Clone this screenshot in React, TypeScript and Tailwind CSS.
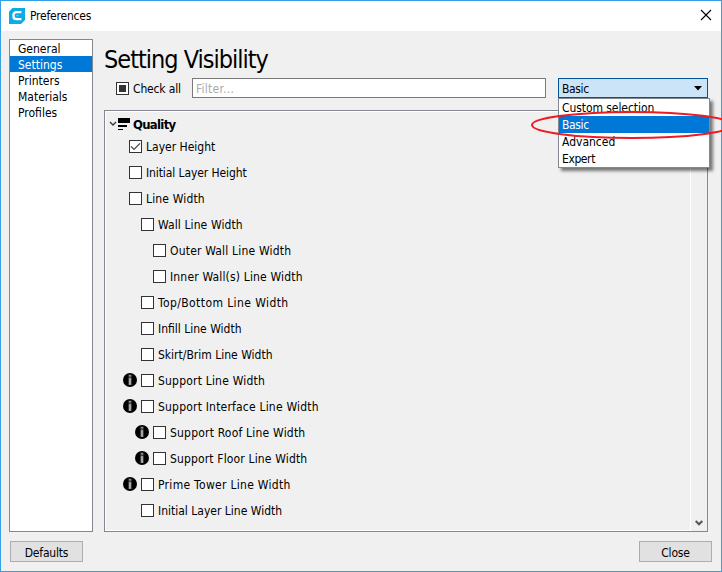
import React from "react";

type Row = { label: string; pad: string; track: string; info?: boolean; checked?: boolean };

const rows: Row[] = [
  { label: "Layer Height", pad: "pl-[6px]", track: "tracking-normal", checked: true },
  { label: "Initial Layer Height", pad: "pl-[6px]", track: "tracking-[-0.1px]" },
  { label: "Line Width", pad: "pl-[6px]", track: "tracking-[0.15px]" },
  { label: "Wall Line Width", pad: "pl-[18px]", track: "tracking-[0.1px]" },
  { label: "Outer Wall Line Width", pad: "pl-[30px]", track: "tracking-[0.19px]" },
  { label: "Inner Wall(s) Line Width", pad: "pl-[30px]", track: "tracking-[0.17px]" },
  { label: "Top/Bottom Line Width", pad: "pl-[18px]", track: "tracking-[0.41px]" },
  { label: "Infill Line Width", pad: "pl-[18px]", track: "tracking-normal" },
  { label: "Skirt/Brim Line Width", pad: "pl-[18px]", track: "tracking-normal" },
  { label: "Support Line Width", pad: "pl-[18px]", track: "tracking-[0.2px]", info: true },
  { label: "Support Interface Line Width", pad: "pl-[18px]", track: "tracking-[0.2px]", info: true },
  { label: "Support Roof Line Width", pad: "pl-[30px]", track: "tracking-[0.2px]", info: true },
  { label: "Support Floor Line Width", pad: "pl-[30px]", track: "tracking-[0.15px]", info: true },
  { label: "Prime Tower Line Width", pad: "pl-[18px]", track: "tracking-[0.3px]", info: true },
  { label: "Initial Layer Line Width", pad: "pl-[18px]", track: "tracking-normal" },
];

const pages = ["General", "Settings", "Printers", "Materials", "Profiles"];
const presets = [
  { name: "Custom selection", track: "tracking-[-0.07px]" },
  { name: "Basic", track: "tracking-[-0.35px]" },
  { name: "Advanced", track: "tracking-normal" },
  { name: "Expert", track: "tracking-[-0.4px]" },
];

function CheckBox({ state }: { state?: "checked" | "partial" }) {
  return (
    <span className="flex size-[13px] shrink-0 items-center justify-center border border-[#333] bg-white">
      {state === "partial" && <span className="size-[7px] bg-[#333]" />}
      {state === "checked" && (
        <svg width="11" height="11" viewBox="0 0 11 11" fill="none" stroke="#444" strokeWidth="1.3">
          <path d="M1 5.4 4 8.4 10 2.4" />
        </svg>
      )}
    </span>
  );
}

function InfoIcon() {
  return (
    <svg className="-ml-px" width="14" height="14" viewBox="0 0 14 14">
      <circle cx="7" cy="7" r="7" fill="#000" />
      <path d="M5.6 1.8h2.8v2H5.6zM5.6 4.6h2.8v7.4H5.6z" fill="#8c8c8c" />
      <path d="M6.5 5.4h1v6h-1z" fill="#c4c4c4" />
    </svg>
  );
}

function PushButton({ children }: { children: React.ReactNode }) {
  return (
    <button className="flex h-[21px] w-[73px] items-center justify-center border border-[#adadad] bg-[#e1e1e1] pt-[2px] tracking-[-0.2px]">
      {children}
    </button>
  );
}

export default function App() {
  return (
    <div className="relative h-[572px] w-[722px] overflow-hidden font-['DejaVu_Sans_Condensed','DejaVu_Sans',sans-serif] text-[12px] leading-[16px] text-black [font-stretch:condensed]">
      <div className="flex h-full flex-col border border-[#35a0e4] bg-[#f0f0f0]">
        <header className="flex h-[30px] shrink-0 items-center bg-white pl-2">
          <svg className="mb-px" width="16" height="16" viewBox="0 0 16 16">
            <path d="M3.5 0H16v12l-4 4H0V3.5z" fill="#0eaae6" />
            <path d="M12.4 4.2H7.6Q4.4 4.2 4.4 7.7T7.6 11.2H12.4" fill="none" stroke="#fff" strokeWidth="2.3" />
            <path d="M7.4 7.7H9.4" stroke="#7fd3f3" strokeWidth="1" />
          </svg>
          <span className="ml-[5px] tracking-[-0.2px]">Preferences</span>
          <svg className="mb-[2px] ml-auto mr-[9px]" width="12" height="12" viewBox="0 0 12 12" stroke="#000" strokeWidth="1.1">
            <path d="M1 1l10 10M11 1 1 11" />
          </svg>
        </header>

        <div className="mt-2 flex h-[493px] shrink-0 pl-2">
          <nav className="h-[493px] w-[84px] border border-[#828790] bg-white">
            {pages.map((p) => (
              <div key={p} className={p === "Settings" ? "h-4 bg-[#0078d7] pl-2 leading-[18px] text-white" : "h-4 pl-2 leading-[18px]"}>
                {p}
              </div>
            ))}
          </nav>

          <main className="ml-[11px] flex w-[604px] flex-col">
            <h1 className="h-[39px] whitespace-nowrap text-[25px] leading-[42px] tracking-[-1px]">Setting Visibility</h1>
            <div className="flex h-5 items-center pl-3">
              <CheckBox state="partial" />
              <span className="ml-1 w-[59px] pt-px tracking-[-0.15px]">Check all</span>
              <div className="h-5 w-[354px] border border-[#7a7a7a] bg-white pl-[3px] leading-[20px] tracking-[0.25px] text-[#aaa]">Filter...</div>
              <div className="relative ml-3 flex h-5 w-[150px] items-center border border-[#00549a] bg-[#cce4f7] pl-[3px]">
                <span className="mt-px tracking-[-0.35px]">Basic</span>
                <svg className="ml-auto mr-[5px]" width="8" height="5" viewBox="0 0 8 5">
                  <path d="M0 0h8L4 4.5z" />
                </svg>
                <div className="absolute -left-px top-[19px] z-10 h-[70px] w-[152px] border border-[#828790] bg-white shadow-[3px_3px_3px_0px_rgba(0,0,0,0.5)]">
                  {presets.map(({ name, track }) => (
                    <div
                      key={name}
                      className={
                        (name === "Basic" ? "h-[17px] bg-[#0078d7] pl-[3px] leading-[19px] text-white " : "h-[17px] pl-[3px] leading-[19px] ") + track
                      }
                    >
                      {name}
                    </div>
                  ))}
                </div>
              </div>
            </div>

            <section className="mt-3 flex h-[422px] border border-[#828790]">
              <div className="w-[586px] border border-white">
                <div className="flex h-[21px] items-center pl-[3px] pt-[3px]">
                  <svg width="8" height="6" viewBox="0 0 8 6" fill="none" stroke="#333" strokeWidth="1.3">
                    <path d="M1 1l3 3 3-3" />
                  </svg>
                  <svg className="ml-px" width="13" height="12" viewBox="0 0 13 12">
                    <path d="M0 0h12v5H0zM0 7h9v2H0zM0 11h5v1H0z" />
                  </svg>
                  <span className="ml-[2px] pt-px text-[13px] font-bold tracking-[-0.7px]">Quality</span>
                </div>
                {rows.map((r) => (
                  <div key={r.label} className={"flex h-[26px] items-center whitespace-nowrap " + r.pad}>
                    <span className="flex w-[17px] shrink-0 items-center">{r.info && <InfoIcon />}</span>
                    <CheckBox state={r.checked ? "checked" : undefined} />
                    <span className={"ml-1 pt-px " + r.track}>{r.label}</span>
                  </div>
                ))}
              </div>
              <div className="flex flex-1 items-end justify-center pb-[4px]">
                <svg width="8" height="7" viewBox="0 0 8 7" fill="none" stroke="#555" strokeWidth="2">
                  <path d="M.7 1 4 4.3 7.3 1" />
                </svg>
              </div>
            </section>
          </main>
        </div>

        <footer className="mt-[9px] flex justify-between px-[9px]">
          <PushButton>Defaults</PushButton>
          <PushButton>Close</PushButton>
        </footer>
      </div>

      <svg className="pointer-events-none absolute left-[530px] top-[109px] z-20" width="192" height="32" viewBox="0 0 192 32">
        <ellipse cx="102" cy="16" rx="100" ry="13" fill="none" stroke="#ed1c24" strokeWidth="2" />
      </svg>
    </div>
  );
}
